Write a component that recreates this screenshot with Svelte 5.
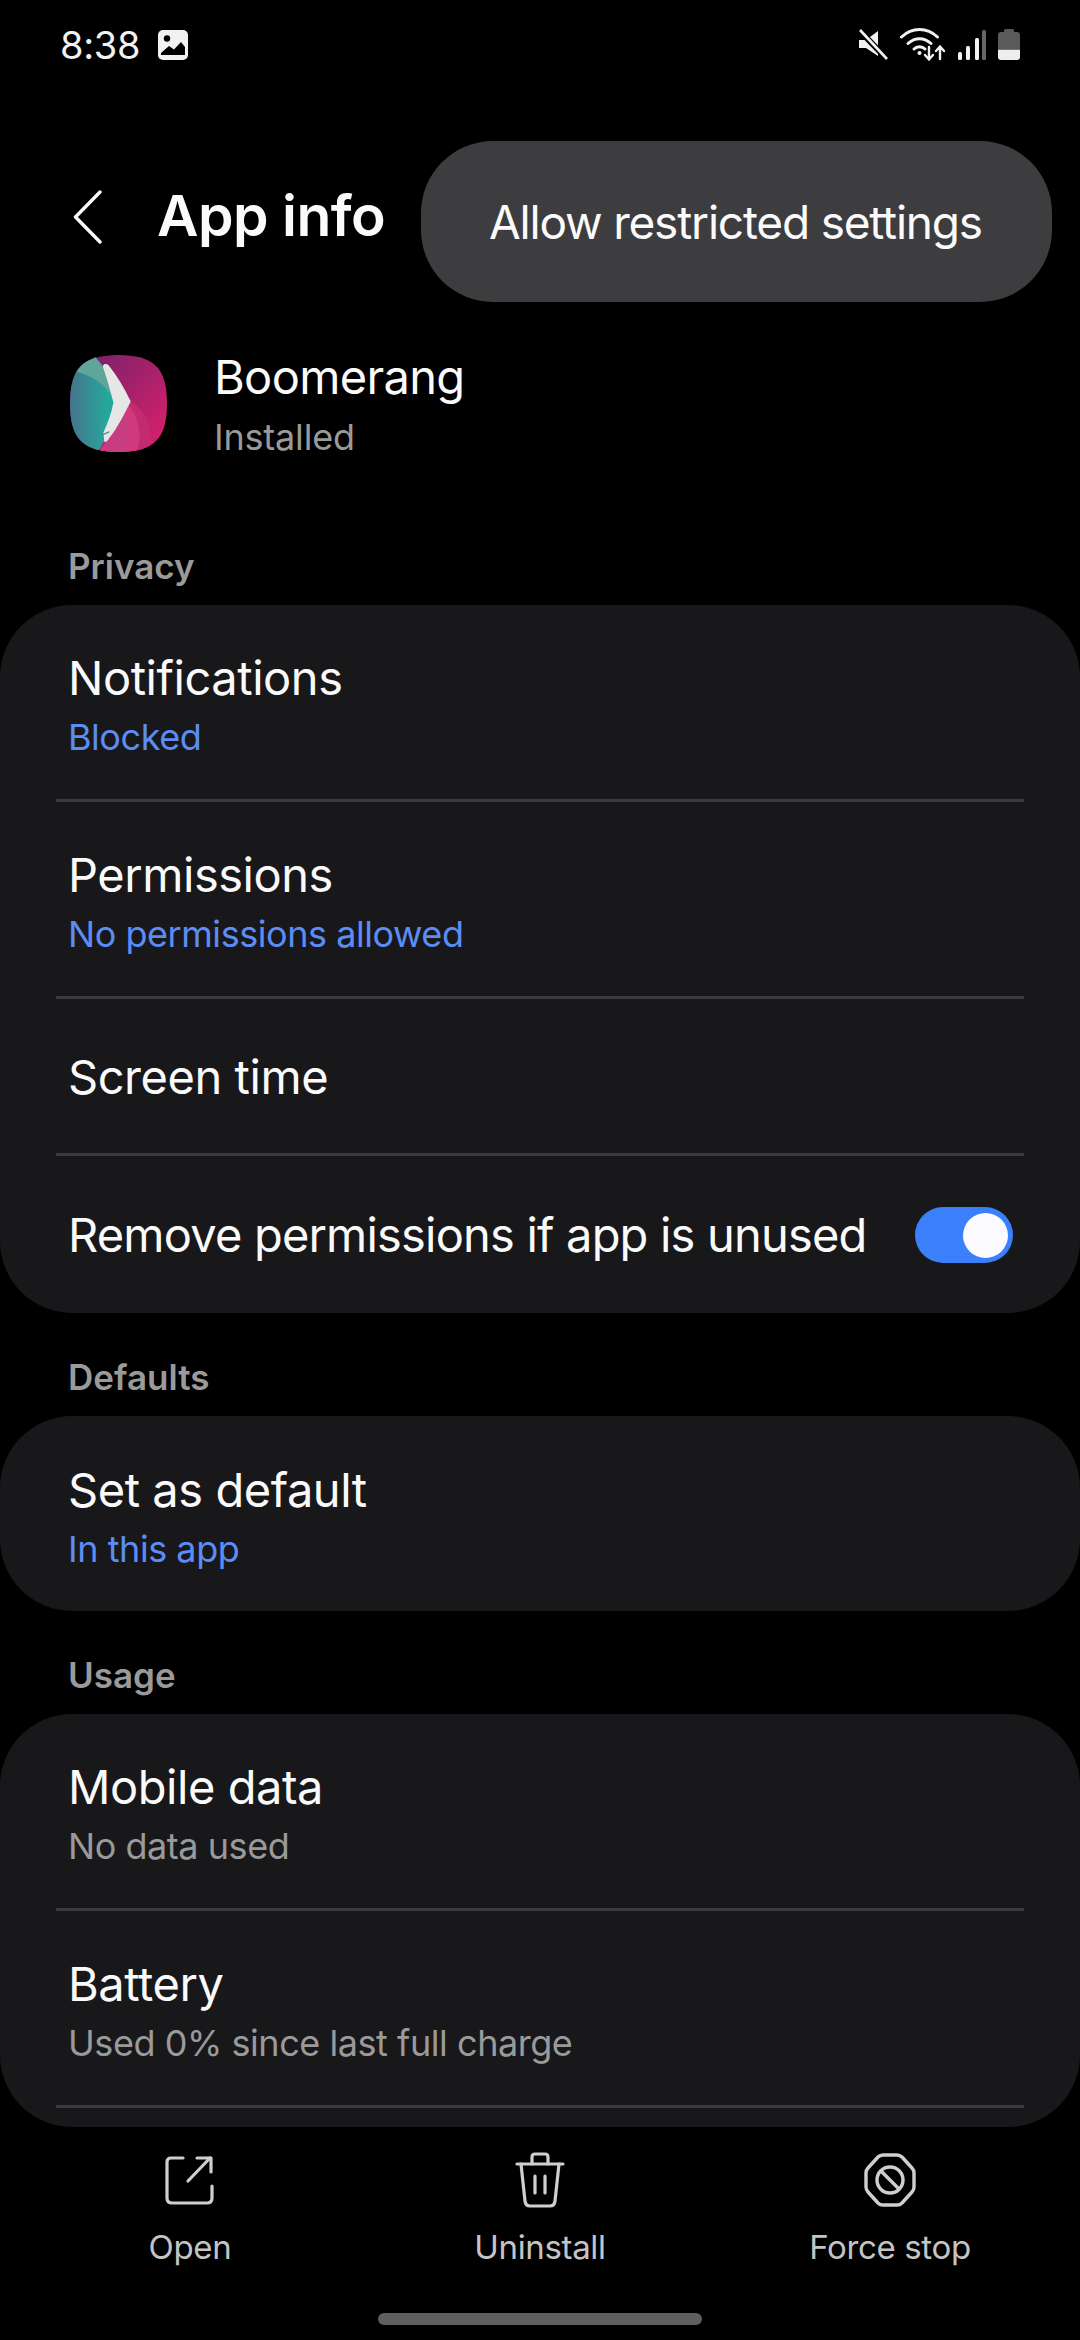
<script>
  const privacy = [
    { title: 'Notifications', sub: 'Blocked', blue: true },
    { title: 'Permissions', sub: 'No permissions allowed', blue: true },
    { title: 'Screen time' }
  ];
  const usage = [
    { title: 'Mobile data', sub: 'No data used' },
    { title: 'Battery', sub: 'Used 0% since last full charge' }
  ];
</script>

{#snippet row(item)}
  <div class="row" class:single={!item.sub}>
    <div class="title">{item.title}</div>
    {#if item.sub}
      <div class="sub" class:blue={item.blue}>{item.sub}</div>
    {/if}
  </div>
{/snippet}

<main>
  <div class="status">
    <div class="status-left">
      <span class="time">8:38</span>
      <svg width="32" height="32" viewBox="0 0 32 32">
        <rect x="1" y="1" width="30" height="30" rx="5" fill="#f2f2f2" />
        <circle cx="10" cy="9.5" r="3.2" fill="#000" />
        <path d="M4 24 L12 17 L17 20.5 L24 13 L28 18 V26 H4Z" fill="#000" />
      </svg>
    </div>
    <div class="status-right">
      <svg width="30" height="32" viewBox="0 0 30 32">
        <path d="M1 11 H8 L20 2 V27 L8 19 H1Z" fill="#f2f2f2" />
        <path d="M0 0 L30 31" stroke="#000" stroke-width="6" />
        <path d="M2 1 L29 30" stroke="#f2f2f2" stroke-width="2.6" />
      </svg>
      <svg width="46" height="34" viewBox="0 0 46 34" fill="none" stroke="#f2f2f2" stroke-width="3" stroke-linecap="round">
        <path d="M1.5 9 C12 -1 27 -1 37.500 9" />
        <path d="M8 15.500 C15 9 24 9 31 15.500" />
        <path d="M14 21 C17 18 22 18 25 21" />
        <circle cx="19.500" cy="25" r="2" fill="#f2f2f2" stroke="none" />
        <path d="M29 19 V31 M25 27 L29 31.500 L33 27" stroke-width="2.400" />
        <path d="M40 31 V19 M36 23 L40 18.500 L44 23" stroke-width="2.400" />
      </svg>
      <svg width="28" height="30" viewBox="0 0 28 30">
        <rect x="0" y="22" width="4" height="8" rx="1.500" fill="#f2f2f2" />
        <rect x="8" y="16" width="4" height="14" rx="1.500" fill="#f2f2f2" />
        <rect x="17" y="8" width="4" height="22" rx="1.500" fill="#f2f2f2" />
        <rect x="24" y="0" width="4" height="30" rx="1.500" fill="#666" />
      </svg>
      <svg width="22" height="32" viewBox="0 0 22 32">
        <rect x="6" y="0" width="10" height="4" rx="1.500" fill="#5a5a5a" />
        <path d="M0 20 V6 Q0 3 3 3 H19 Q22 3 22 6 V20Z" fill="#5a5a5a" />
        <path d="M0 20.500 H22 V28 Q22 31 19 31 H3 Q0 31 0 28Z" fill="#eeeeee" />
      </svg>
    </div>
  </div>

  <header>
    <svg class="back" width="30" height="54" viewBox="0 0 30 54" fill="none" stroke="#fafafa" stroke-width="3.400" stroke-linecap="round" stroke-linejoin="round">
      <path d="M27 2 L2.500 27 L27 52" />
    </svg>
    <h1>App info</h1>
  </header>

  <div class="menu">Allow restricted settings</div>

  <section class="app">
    <svg class="app-icon" width="97" height="97" viewBox="0 0 96 96">
      <defs>
        <clipPath id="squircle">
          <path d="M48 0 C83 0 96 13 96 48 C96 83 83 96 48 96 C13 96 0 83 0 48 C0 13 13 0 48 0Z" />
        </clipPath>
        <linearGradient id="magenta" x1="0.300" y1="0.050" x2="1" y2="0.700">
          <stop offset="0" stop-color="#80226a" />
          <stop offset="1" stop-color="#d0206a" />
        </linearGradient>
        <linearGradient id="teal" x1="0" y1="0" x2="1" y2="0">
          <stop offset="0" stop-color="#4a6d8a" />
          <stop offset="0.650" stop-color="#25a89c" />
        </linearGradient>
      </defs>
      <g clip-path="url(#squircle)">
        <rect width="96" height="96" fill="url(#magenta)" />
        <path d="M60 45 C78 58 84 78 78 96 H30 L40 80Z" fill="#c42a70" />
        <path d="M58 50 C68 62 72 80 66 96 H30 L40 80Z" fill="#d03a7c" />
        <path d="M54 58 C60 70 60 84 52 96 H28 L40 80Z" fill="#c63d80" />
        <path d="M25 2 L-4 0 V96 H27 L60 45Z" fill="url(#teal)" />
        <path d="M25 2 L-4 0 V14 C20 18 36 28 44 46 L60 45Z" fill="#5fa599" />
        <path d="M35 9 C33 9 32 11 33 13 C37 24 40 36 43 47 C41 58 37 68 33 77 L34 86 C36 87 38 84 39 82 C47 72 54 58 60 46 C54 33 46 20 38 10 Q37 9 35 9Z" fill="#e6e6e6" />
        <path d="M32 79 L39 76" stroke="#2f8f8f" stroke-width="1.200" />
      </g>
    </svg>
    <div>
      <div class="app-name">Boomerang</div>
      <div class="sub">Installed</div>
    </div>
  </section>

  <div class="label">Privacy</div>
  <div class="card">
    {#each privacy as item}
      {@render row(item)}
    {/each}
    <div class="row single last toggle-row">
      <div class="title">Remove permissions if app is unused</div>
      <div class="toggle"><span></span></div>
    </div>
  </div>

  <div class="label">Defaults</div>
  <div class="card">
    <div class="row last">
      <div class="title">Set as default</div>
      <div class="sub blue">In this app</div>
    </div>
  </div>

  <div class="label">Usage</div>
  <div class="card usage">
    {#each usage as item}
      {@render row(item)}
    {/each}
  </div>

  <nav>
    <div class="action">
      <svg width="52" height="52" viewBox="0 0 52 52" fill="none" stroke="#cfcfcf" stroke-width="3.200" stroke-linecap="round" stroke-linejoin="round">
        <path d="M19 4 H7 Q3 4 3 8 V44 Q3 49 8 49 H43 Q48 49 48 44 V32" />
        <path d="M24 27 L46 4" />
        <path d="M33 4 H47 V18" />
      </svg>
      <span>Open</span>
    </div>
    <div class="action">
      <svg width="50" height="56" viewBox="0 0 50 56" fill="none" stroke="#cfcfcf" stroke-width="3.200" stroke-linecap="round" stroke-linejoin="round">
        <path d="M2 12 H48" />
        <path d="M17 12 V5 Q17 2 20 2 H30 Q33 2 33 5 V12" />
        <path d="M6 12 L10 49 Q10.500 54 15 54 H35 Q39.500 54 40 49 L44 12" />
        <path d="M20 24 V41 M30 24 V41" />
      </svg>
      <span>Uninstall</span>
    </div>
    <div class="action">
      <svg width="52" height="54" viewBox="0 0 52 54" fill="none" stroke="#cfcfcf" stroke-width="3.400" stroke-linecap="round" stroke-linejoin="round">
        <path d="M19 2 H33 Q36 2 38 4 L48 15 Q50 17 50 20 V34 Q50 37 48 39 L38 50 Q36 52 33 52 H19 Q16 52 14 50 L4 39 Q2 37 2 34 V20 Q2 17 4 15 L14 4 Q16 2 19 2Z" />
        <circle cx="26" cy="27" r="13" />
        <path d="M17 18 L35 36" />
      </svg>
      <span>Force stop</span>
    </div>
  </nav>

  <div class="home"></div>
</main>

<style>
  :global(body) {
    margin: 0;
    background: #000;
  }
  main {
    position: relative;
    width: 1080px;
    height: 2340px;
    overflow: hidden;
    background: #000;
    color: #fafafa;
    font-family: Inter, 'Noto Sans', sans-serif;
  }
  .status {
    display: flex;
    justify-content: space-between;
    align-items: center;
    height: 32px;
    padding: 29px 60px 0 60px;
  }
  .status-left {
    display: flex;
    align-items: center;
    gap: 17px;
  }
  .time {
    font-size: 38px;
    letter-spacing: -0.3px;
    color: #f2f2f2;
  }
  .status-right {
    display: flex;
    align-items: center;
    gap: 12px;
  }
  header {
    display: flex;
    align-items: center;
    height: 60px;
    margin-top: 124px;
    padding-left: 73px;
  }
  .back {
    flex: none;
    margin-top: 4px;
  }
  h1 {
    margin: 0 0 0 54px;
    font-size: 57px;
    font-weight: 600;
    letter-spacing: -0.5px;
  }
  .menu {
    position: absolute;
    left: 421px;
    top: 141px;
    width: 631px;
    height: 161px;
    box-sizing: border-box;
    padding-left: 68px;
    display: flex;
    align-items: center;
    border-radius: 72px;
    background: #3d3d3f;
    font-size: 46px;
    letter-spacing: -1.2px;
  }
  .app {
    display: flex;
    align-items: center;
    gap: 47px;
    margin-top: 110px;
    padding-left: 70px;
    height: 97px;
  }
  .app-name {
    font-size: 47px;
    line-height: 58px;
    letter-spacing: -0.65px;
  }
  .app .sub {
    margin-top: 8px;
    letter-spacing: -0.2px;
  }
  .label {
    padding-left: 68px;
    height: 44px;
    font-size: 35px;
    line-height: 44px;
    font-weight: 600;
    color: #9a9a9a;
  }
  .app + .label {
    margin-top: 92px;
  }
  .card + .label {
    margin-top: 42px;
  }
  .card {
    margin-top: 17px;
    background: #18181a;
    border-radius: 72px;
    padding: 0 56px;
    overflow: hidden;
  }
  .usage {
    padding-bottom: 19px;
  }
  .row {
    box-sizing: border-box;
    height: 197px;
    padding: 5px 12px 0;
    display: flex;
    flex-direction: column;
    justify-content: center;
    border-bottom: 3px solid #3a3a3c;
  }
  .row.single {
    height: 157px;
    padding-top: 1px;
  }
  .row.last {
    border-bottom: none;
    height: 195px;
  }
  .row.single.last {
    height: 157px;
  }
  .toggle-row {
    flex-direction: row;
    align-items: center;
    justify-content: space-between;
    padding-right: 11px;
  }
  .title {
    font-size: 47px;
    line-height: 58px;
    letter-spacing: -0.45px;
  }
  .toggle-row .title {
    letter-spacing: -0.8px;
  }
  .sub {
    font-size: 36px;
    line-height: 46px;
    margin-top: 7px;
    color: #9a9a9a;
    letter-spacing: -0.45px;
  }
  .blue {
    color: #5b8df5;
  }
  .toggle {
    width: 98px;
    height: 56px;
    border-radius: 28px;
    background: #3b7ffa;
    position: relative;
  }
  .toggle span {
    position: absolute;
    right: 5px;
    top: 6px;
    width: 45px;
    height: 45px;
    border-radius: 50%;
    background: #fbfbff;
  }
  nav {
    display: grid;
    grid-template-columns: 350px 350px 350px;
    justify-content: center;
    margin-top: 25px;
  }
  .action {
    display: flex;
    flex-direction: column;
    align-items: center;
    font-size: 33px;
    letter-spacing: -0.35px;
    color: #c4c4c4;
    height: 120px;
  }
  .action svg {
    height: 56px;
    margin-bottom: 19px;
  }
  .home {
    position: absolute;
    left: 378px;
    top: 2313px;
    width: 324px;
    height: 12px;
    border-radius: 6px;
    background: #5f5f5f;
  }
</style>
